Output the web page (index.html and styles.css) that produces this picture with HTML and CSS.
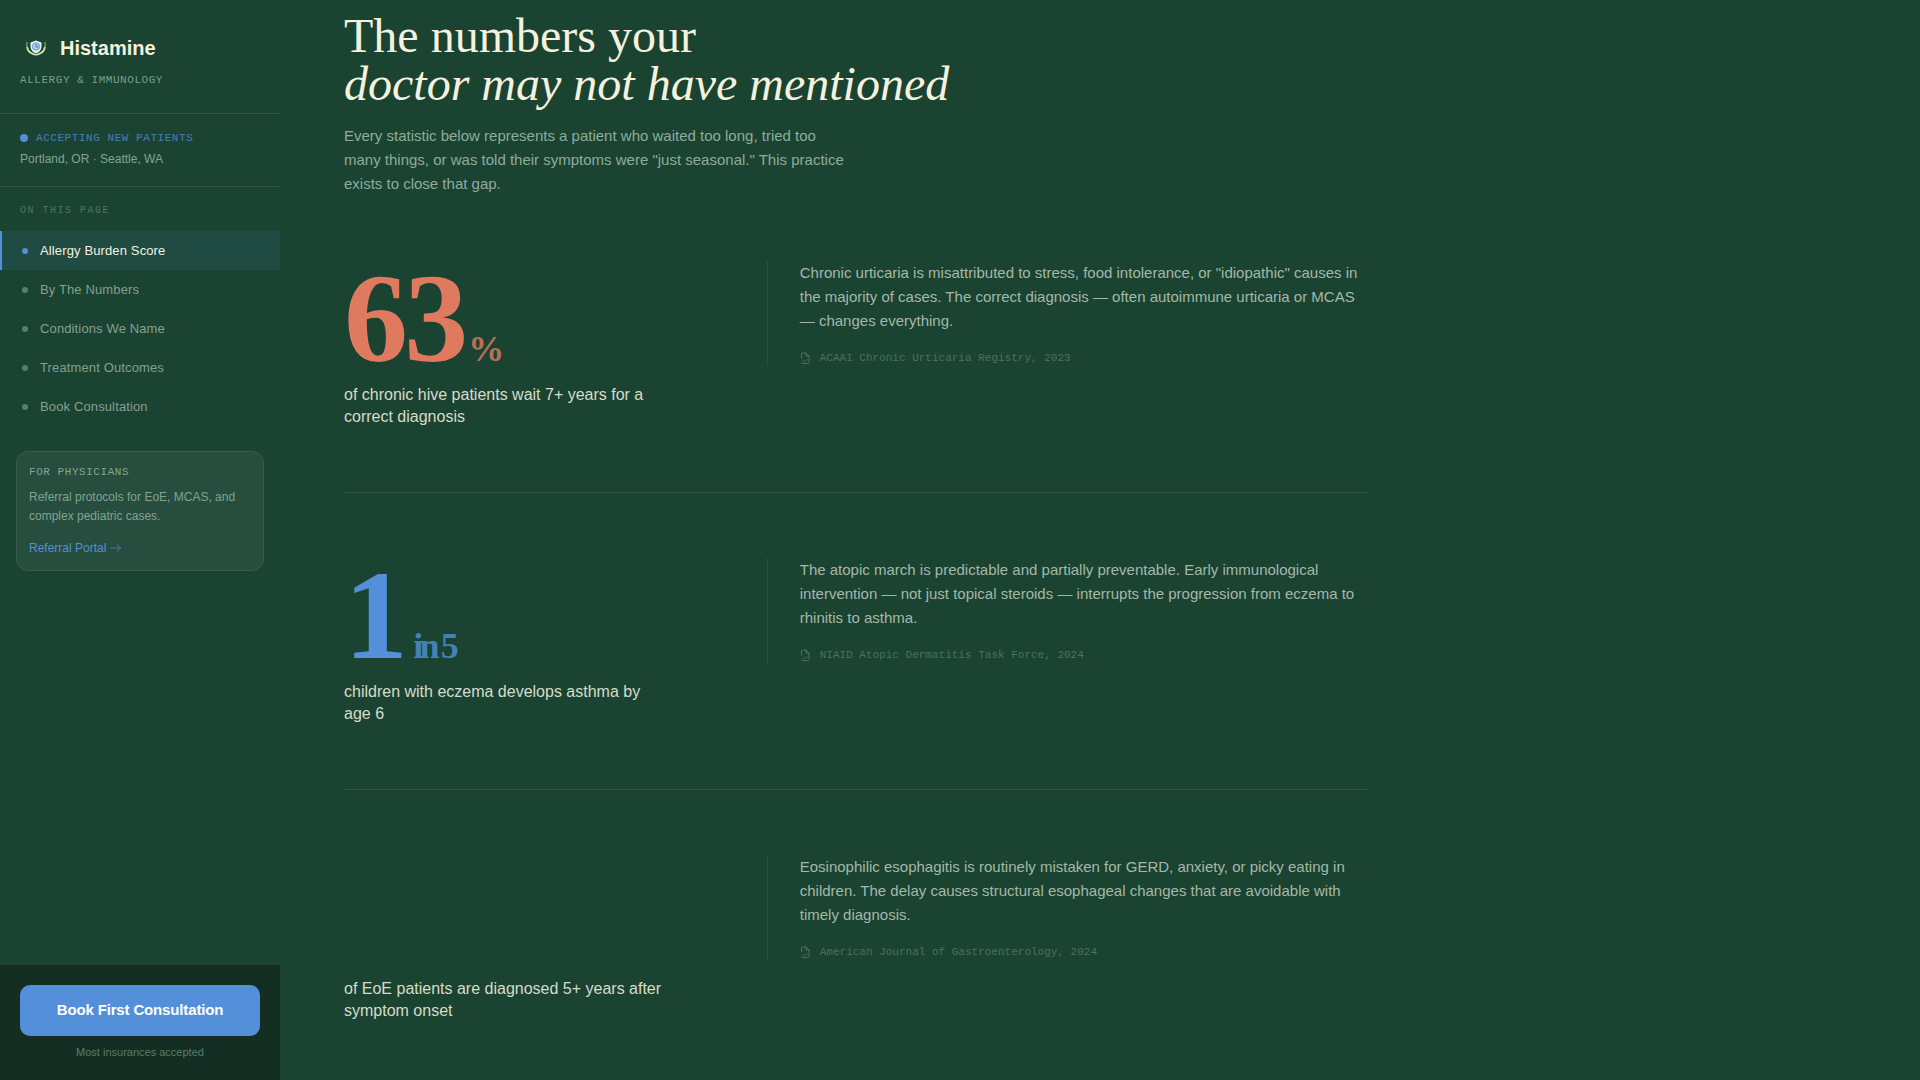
FILE: index.html
```html
<!DOCTYPE html>
<html lang="en">
<head>
<meta charset="utf-8">
<meta name="viewport" content="width=device-width, initial-scale=1">
<title>Histamine – Allergy &amp; Immunology</title>
<link rel="stylesheet" href="styles.css">
</head>
<body>
<svg class="sprite" aria-hidden="true">
  <symbol id="icon-file" viewBox="0 0 12 12">
    <path d="M1.500 6V2.200Q1.500 1 2.700 1H6L9 4V10.200Q9 11.500 7.700 11.500H2.700Q1.500 11.500 1.500 10.500M6 1V4H9M3.500 8.500L4.800 9.700L7 7.500" fill="none" stroke="currentColor" stroke-linecap="round" stroke-linejoin="round"/>
  </symbol>
</svg>
<div class="layout">
  <aside class="sidebar">
    <header class="brand">
      <a class="brand-link" href="#top">
        <svg class="logo" viewBox="0 0 32 32" aria-hidden="true">
          <path d="M7 10Q6 14 8 18Q10 21 14 22M25 10Q26 14 24 18Q22 21 18 22" fill="none" stroke="#4f8a55" stroke-width="2"/>
          <path d="M7 15Q8 20 12 21.500Q16 24 20 21.500Q24 20 25 15" fill="none" stroke="#d5e2b0" stroke-width="1.500"/>
          <path d="M10.500 10.500L16 8.500L21.500 10.500V15Q21 19.500 16 21.500Q11 19.500 10.500 15Z" fill="#e9f3ef"/>
          <circle cx="16" cy="14.500" r="3.700" fill="#a9d0f2" stroke="#6a9fcb"/>
          <path d="M16 12V15H18.500" fill="none" stroke="#3d78ae"/>
        </svg>
        <span class="brand-name">Histamine</span>
      </a>
      <p class="brand-sub">ALLERGY &amp; IMMUNOLOGY</p>
    </header>
    <section class="status">
      <p class="status-line"><span class="status-dot"></span>ACCEPTING NEW PATIENTS</p>
      <p class="status-place">Portland, OR · Seattle, WA</p>
    </section>
    <nav class="nav" aria-labelledby="nav-title">
      <p class="nav-title" id="nav-title">ON THIS PAGE</p>
      <a class="nav-item nav-item-active" href="#score">Allergy Burden Score</a>
      <a class="nav-item" href="#numbers">By The Numbers</a>
      <a class="nav-item" href="#conditions">Conditions We Name</a>
      <a class="nav-item" href="#outcomes">Treatment Outcomes</a>
      <a class="nav-item" href="#book">Book Consultation</a>
    </nav>
    <section class="referral">
      <p class="referral-title">FOR PHYSICIANS</p>
      <p class="referral-text">Referral protocols for EoE, MCAS, and complex pediatric cases.</p>
      <a class="referral-link" href="#portal">Referral Portal
        <svg class="arrow" viewBox="0 0 12 12" aria-hidden="true"><path d="M1 6H10.500M7 2.500L10.500 6L7 9.500" fill="none" stroke="currentColor" stroke-linecap="round" stroke-linejoin="round"/></svg>
      </a>
    </section>
    <footer class="booking">
      <button class="booking-button" type="button">Book First Consultation</button>
      <p class="booking-note">Most insurances accepted</p>
    </footer>
  </aside>
  <main class="content">
    <h1 class="title">The numbers your<br><em>doctor may not have mentioned</em></h1>
    <p class="intro">Every statistic below represents a patient who waited too long, tried too many things, or was told their symptoms were "just seasonal." This practice exists to close that gap.</p>
    <article class="stat">
      <div class="stat-main">
        <p class="stat-number stat-coral">63<span class="stat-unit">%</span></p>
        <p class="stat-label">of chronic hive patients wait 7+ years for a correct diagnosis</p>
      </div>
      <div class="stat-detail">
        <p class="stat-text">Chronic urticaria is misattributed to stress, food intolerance, or "idiopathic" causes in the majority of cases. The correct diagnosis — often autoimmune urticaria or MCAS — changes everything.</p>
        <p class="stat-source"><svg class="file" aria-hidden="true"><use href="#icon-file"/></svg>ACAAI Chronic Urticaria Registry, 2023</p>
      </div>
    </article>
    <article class="stat">
      <div class="stat-main">
        <p class="stat-number stat-blue">1<span class="stat-unit"> in 5</span></p>
        <p class="stat-label">children with eczema develops asthma by age 6</p>
      </div>
      <div class="stat-detail">
        <p class="stat-text">The atopic march is predictable and partially preventable. Early immunological intervention — not just topical steroids — interrupts the progression from eczema to rhinitis to asthma.</p>
        <p class="stat-source"><svg class="file" aria-hidden="true"><use href="#icon-file"/></svg>NIAID Atopic Dermatitis Task Force, 2024</p>
      </div>
    </article>
    <article class="stat">
      <div class="stat-main">
        <p class="stat-number"></p>
        <p class="stat-label">of EoE patients are diagnosed 5+ years after symptom onset</p>
      </div>
      <div class="stat-detail">
        <p class="stat-text">Eosinophilic esophagitis is routinely mistaken for GERD, anxiety, or picky eating in children. The delay causes structural esophageal changes that are avoidable with timely diagnosis.</p>
        <p class="stat-source"><svg class="file" aria-hidden="true"><use href="#icon-file"/></svg>American Journal of Gastroenterology, 2024</p>
      </div>
    </article>
  </main>
</div>
</body>
</html>
```
FILE: styles.css
```css
* { box-sizing: border-box; margin: 0; padding: 0; }

:root {
  --green: #1b4332;
  --line: #305545;
  --cream: #f4f1de;
  --sage: #8fac9b;
  --sage-dim: #4e7562;
  --blue: #5390d9;
  --coral: #e07a5f;
  --mono: "Liberation Mono", "Courier New", monospace;
}

body {
  background: var(--green);
  color: var(--cream);
  font-family: "Liberation Sans", Arial, sans-serif;
}

a { color: inherit; text-decoration: none; }

.sprite { display: none; }

.layout { display: flex; align-items: flex-start; }

/* Sidebar */
.sidebar {
  position: sticky;
  top: 0;
  display: flex;
  flex-direction: column;
  flex: 0 0 280px;
  height: 100vh;
}

.brand { padding: 32px 20px 25px; border-bottom: 1px solid var(--line); }
.brand-link { display: flex; align-items: center; gap: 8px; }
.logo { width: 32px; height: 32px; }
.brand-name { font-size: 20px; line-height: 32px; font-weight: 700; }
.brand-sub {
  margin-top: 8px;
  color: #75a18c;
  font: 11px/16px var(--mono);
  letter-spacing: 0.05em;
}

.status { padding: 16px 20px 18px; border-bottom: 1px solid var(--line); }
.status-line {
  display: flex;
  align-items: center;
  gap: 8px;
  color: #467fb8;
  font: 11px/16px var(--mono);
  letter-spacing: 0.05em;
}
.status-dot { width: 8px; height: 8px; border-radius: 50%; background: var(--blue); }
.status-place { margin-top: 4px; color: #84a392; font-size: 12px; line-height: 18px; }

.nav { display: flex; flex-direction: column; padding-top: 16px; }
.nav-title {
  padding: 0 20px;
  margin-bottom: 12px;
  color: var(--sage-dim);
  font: 10px/16px var(--mono);
  letter-spacing: 0.15em;
}
.nav-item {
  display: flex;
  align-items: center;
  gap: 12px;
  padding: 0 20px;
  color: #83a090;
  font-size: 13px;
  line-height: 39px;
  letter-spacing: 0.01em;
  border-left: 2px solid transparent;
}
.nav-item::before {
  content: "";
  width: 6px;
  height: 6px;
  border-radius: 50%;
  background: #57806b;
}
.nav-item-active { color: var(--cream); background: #204b43; border-color: var(--blue); }
.nav-item-active::before { background: var(--blue); }

.referral {
  margin: 25px 16px 0;
  padding: 12px;
  border: 1px solid #365e4c;
  border-radius: 12px;
  background: #264d3d;
}
.referral-title { color: #82a794; font: 11px/16px var(--mono); letter-spacing: 0.05em; }
.referral-text { margin-top: 8px; color: #83a392; font-size: 12px; line-height: 19px; }
.referral-link {
  display: flex;
  align-items: center;
  gap: 4px;
  margin-top: 12px;
  color: var(--blue);
  font-size: 12px;
  line-height: 20px;
}
.arrow { width: 12px; height: 12px; opacity: 0.7; }

.booking { margin-top: auto; padding: 20px; background: #152e23; text-align: center; }
.booking-button {
  display: block;
  width: 100%;
  padding: 15px 16px 17px;
  border: 0;
  border-radius: 10px;
  background: var(--blue);
  color: #fff;
  font: 700 15px/19px "Liberation Sans", Arial, sans-serif;
  letter-spacing: -0.01em;
}
.booking-note { margin-top: 8px; color: #5c7a69; font-size: 11px; line-height: 16px; }

/* Main column */
.content { flex: 1 1 0; min-width: 0; max-width: 1152px; padding: 12px 64px 0; }
.title {
  font: 400 48px/48px "Liberation Serif", "Times New Roman", serif;
}
.intro {
  max-width: 504px;
  margin: 16px 0 65px;
  color: var(--sage);
  font-size: 15px;
  line-height: 24px;
}

.stat {
  display: grid;
  grid-template-columns: 3fr 5fr;
  column-gap: 62px;
  align-items: start;
  padding-bottom: 64px;
}
.stat + .stat { padding-top: 65px; border-top: 1px solid var(--line); }
.stat-number {
  height: 115px;
  font: 700 128px/115px "Liberation Serif", "Times New Roman", serif;
  letter-spacing: -0.03em;
}
.stat-coral { color: var(--coral); }
.stat-blue { color: var(--blue); }
.stat-unit { margin-left: 4px; font-size: 36px; opacity: 0.8; }
.stat-label { max-width: 320px; margin-top: 8px; color: #d5dcca; font-size: 16px; line-height: 22px; }

.stat-detail { padding-left: 32px; border-left: 1px solid #294f3e; }
.stat-text { color: #a3b9a8; font-size: 15px; line-height: 24px; }
.stat-source {
  display: flex;
  align-items: center;
  gap: 8px;
  margin-top: 17px;
  color: #4b715e;
  font: 11px/16px var(--mono);
}
.file { width: 12px; height: 12px; }

@media (max-width: 900px) {
  .layout { flex-direction: column; align-items: stretch; }
  .sidebar { position: static; flex: none; height: auto; }
  .booking { margin-top: 24px; }
  .content { padding: 32px 24px; }
  .stat { grid-template-columns: 1fr; row-gap: 24px; }
}
```
